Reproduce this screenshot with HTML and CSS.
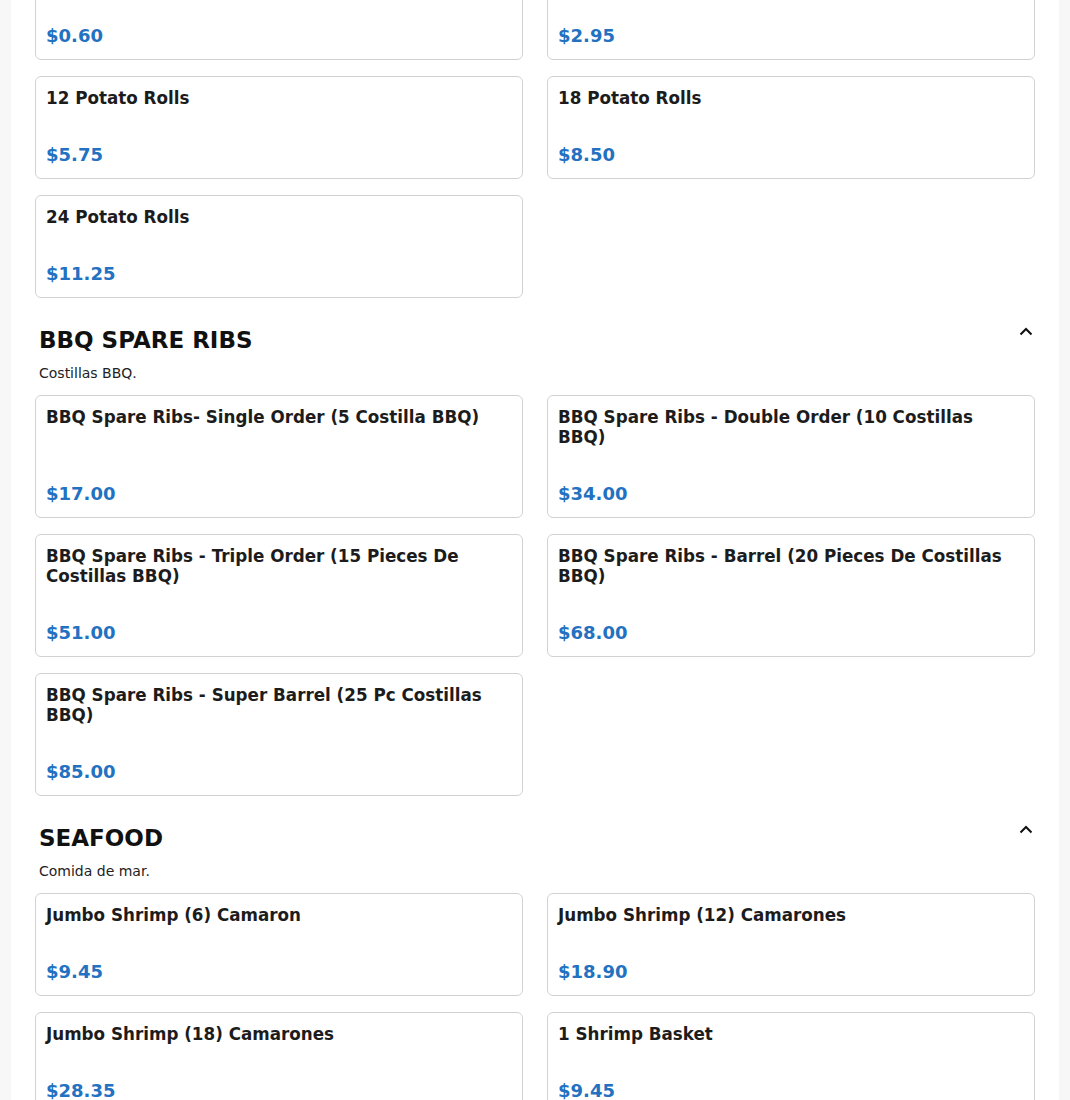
FILE: index.html
```html
<!DOCTYPE html>
<html lang="en">
<head>
<meta charset="utf-8">
<title>Menu</title>
<link rel="stylesheet" href="styles.css">
</head>
<body>
<div class="panel">
  <div class="menu">
    <section class="section section-first">
      <div class="grid">
        <div class="card"><div class="card-title">1 Potato Roll</div><div class="card-price">$0.60</div></div>
        <div class="card"><div class="card-title">6 Potato Rolls</div><div class="card-price">$2.95</div></div>
        <div class="card"><div class="card-title">12 Potato Rolls</div><div class="card-price">$5.75</div></div>
        <div class="card"><div class="card-title">18 Potato Rolls</div><div class="card-price">$8.50</div></div>
        <div class="card"><div class="card-title">24 Potato Rolls</div><div class="card-price">$11.25</div></div>
      </div>
    </section>

    <section class="section">
      <div class="section-head">
        <h2 class="section-title">BBQ SPARE RIBS</h2>
        <svg class="chevron" width="14" height="9" viewBox="0 0 14 9" aria-hidden="true"><path d="M1.5 7.5 L7 2 L12.5 7.5" fill="none" stroke="#111" stroke-width="2"/></svg>
      </div>
      <p class="section-desc">Costillas BBQ.</p>
      <div class="grid">
        <div class="card"><div class="card-title">BBQ Spare Ribs- Single Order (5 Costilla BBQ)</div><div class="card-price">$17.00</div></div>
        <div class="card"><div class="card-title">BBQ Spare Ribs - Double Order (10 Costillas BBQ)</div><div class="card-price">$34.00</div></div>
        <div class="card"><div class="card-title">BBQ Spare Ribs - Triple Order (15 Pieces De Costillas BBQ)</div><div class="card-price">$51.00</div></div>
        <div class="card"><div class="card-title">BBQ Spare Ribs - Barrel (20 Pieces De Costillas BBQ)</div><div class="card-price">$68.00</div></div>
        <div class="card"><div class="card-title">BBQ Spare Ribs - Super Barrel (25 Pc Costillas BBQ)</div><div class="card-price">$85.00</div></div>
      </div>
    </section>

    <section class="section">
      <div class="section-head">
        <h2 class="section-title">SEAFOOD</h2>
        <svg class="chevron" width="14" height="9" viewBox="0 0 14 9" aria-hidden="true"><path d="M1.5 7.5 L7 2 L12.5 7.5" fill="none" stroke="#111" stroke-width="2"/></svg>
      </div>
      <p class="section-desc">Comida de mar.</p>
      <div class="grid">
        <div class="card"><div class="card-title">Jumbo Shrimp (6) Camaron</div><div class="card-price">$9.45</div></div>
        <div class="card"><div class="card-title">Jumbo Shrimp (12) Camarones</div><div class="card-price">$18.90</div></div>
        <div class="card"><div class="card-title">Jumbo Shrimp (18) Camarones</div><div class="card-price">$28.35</div></div>
        <div class="card"><div class="card-title">1 Shrimp Basket</div><div class="card-price">$9.45</div></div>
        <div class="card"><div class="card-title">2 Shrimp Basket</div><div class="card-price">$18.90</div></div>
        <div class="card"><div class="card-title">Fish Basket</div><div class="card-price">$10.50</div></div>
      </div>
    </section>
  </div>
</div>
</body>
</html>
```

FILE: styles.css
```css
html, body {
  margin: 0;
  padding: 0;
}
body {
  background: #f7f7f7;
  font-family: "DejaVu Sans", Verdana, sans-serif;
  color: #1f1f1f;
  overflow: hidden;
}
.panel {
  background: #ffffff;
  margin: 0 11px;
  padding: 0 24px 40px;
  min-height: 1100px;
}
.menu {
  margin-top: -43px;
}
.section + .section {
  margin-top: 28px;
}
.section-head {
  display: flex;
  justify-content: space-between;
  align-items: center;
  padding: 0 2px 0 4px;
}
.section-title {
  margin: 0;
  font-size: 23px;
  font-weight: bold;
  line-height: 28px;
  color: #111;
}
.chevron {
  display: block;
  margin-top: -17px;
}
.section-desc {
  margin: 9px 0 12px;
  padding-left: 4px;
  font-size: 14px;
  line-height: 20px;
  color: #222;
}
.grid {
  display: grid;
  grid-template-columns: 1fr 1fr;
  column-gap: 24px;
  row-gap: 16px;
}
.card {
  border: 1px solid #d2d2d2;
  border-radius: 6px;
  padding: 11px 10px 10px;
  display: flex;
  flex-direction: column;
}
.card-title {
  font-size: 16.75px;
  font-weight: bold;
  line-height: 20px;
  color: #1c1c1c;
  margin-bottom: 33px;
}
.card-price {
  margin-top: auto;
  font-size: 18px;
  font-weight: bold;
  line-height: 27px;
  color: #2371c1;
}
```
